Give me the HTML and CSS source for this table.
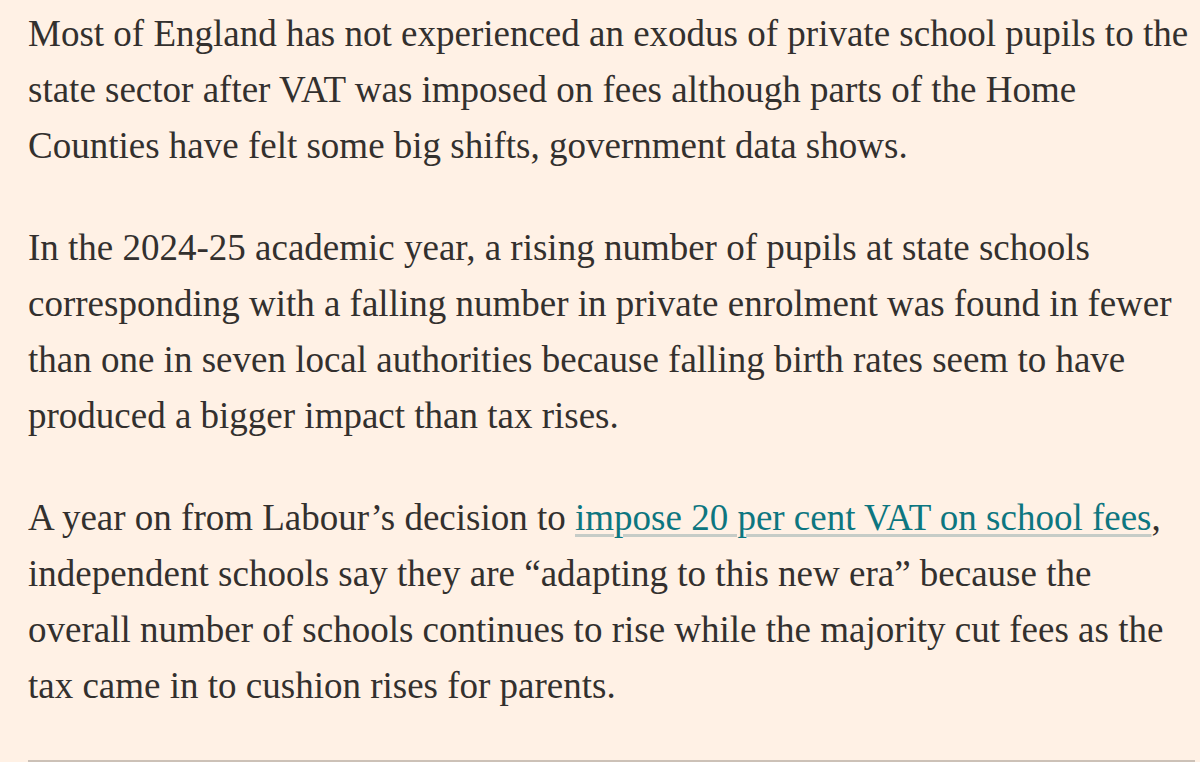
FILE: index.html
```html
<!DOCTYPE html>
<html lang="en">
<head>
<meta charset="utf-8">
<title>Article</title>
<link rel="stylesheet" href="styles.css">
</head>
<body>
<article class="article">
  <p class="para">Most of England has not experienced an exodus of private school pupils to the<br>state sector after VAT was imposed on fees although parts of the Home<br>Counties have felt some big shifts, government data shows.</p>
  <p class="para">In the 2024-25 academic year, a rising number of pupils at state schools<br>corresponding with a falling number in private enrolment was found in fewer<br>than one in seven local authorities because falling birth rates seem to have<br>produced a bigger impact than tax rises.</p>
  <p class="para">A year on from Labour’s decision to <a class="link" href="#">impose 20 per cent VAT on school fees</a>,<br>independent schools say they are “adapting to this new era” because the<br>overall number of schools continues to rise while the majority cut fees as the<br>tax came in to cushion rises for parents.</p>
  <hr class="rule">
</article>
</body>
</html>
```

FILE: styles.css
```css
html, body {
  margin: 0;
  padding: 0;
  background: #fff1e5;
}
body {
  overflow: hidden;
}
.article {
  padding: 6px 0 0 28px;
  font-family: "Liberation Serif", "Times New Roman", serif;
  font-size: 37px;
  line-height: 56px;
  color: #33302e;
}
.para {
  margin: 0 0 46px 0;
  white-space: nowrap;
}
.link {
  color: #0d7680;
  text-decoration: underline;
  text-decoration-color: #c6ccc7;
  text-decoration-thickness: 3px;
  text-underline-offset: 4px;
}
.rule {
  margin: 0 5px 0 0;
  border: 0;
  height: 4px;
  background: #ccc1b7;
}
```
